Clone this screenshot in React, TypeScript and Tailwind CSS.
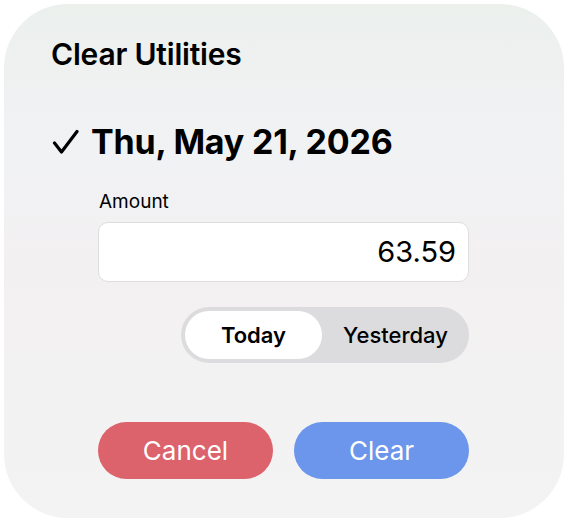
import React, { useState } from 'react';

const Check = () => (
  <svg width="27" height="26" viewBox="0 0 27 26" fill="none" className="shrink-0">
    <path d="M2.5 14 L9.5 23 L25 2.5" stroke="#000" strokeWidth="3.2" strokeLinecap="round" strokeLinejoin="round" />
  </svg>
);

export default function App() {
  const [day, setDay] = useState<'today' | 'yesterday'>('today');

  return (
    <div className="w-[568px] h-[523px] bg-white p-[4px] font-['Inter','Liberation_Sans',sans-serif] text-black">
      <div className="w-[560px] h-[514px] rounded-[64px] bg-[linear-gradient(180deg,#ebf0ed_0%,#eff1f1_14%,#f1f2f4_30%,#f3f0f1_52%,#f3f2f2_70%,#f3f3f3_100%)] pl-[47px] pt-[32px]">
        <h1 className="text-[30px] leading-[36px] font-semibold tracking-[-0.2px]">Clear Utilities</h1>

        <div className="mt-[50px] flex items-center gap-[12px] pl-[1px]">
          <Check />
          <span className="text-[34px] leading-[40px] font-bold tracking-[-0.2px]">Thu, May 21, 2026</span>
        </div>

        <div className="ml-[47px] w-[371px] flex flex-col">
          <label className="mt-[28px] text-[19px] leading-[24px] pl-[1px]">Amount</label>
          <div className="mt-[8px] h-[60px] rounded-[10px] bg-white border border-[#dedede] flex items-center justify-end pr-[12px]">
            <span className="text-[29px] leading-[34px]">63.59</span>
          </div>

          <div className="mt-[25px] self-end w-[288px] h-[56px] rounded-full bg-[#dcdcdf] p-[4px] flex">
            <button
              onClick={() => setDay('today')}
              className={`w-[137px] rounded-full text-[22px] leading-[28px] font-semibold ${day === 'today' ? 'bg-white' : ''}`}
            >
              Today
            </button>
            <button
              onClick={() => setDay('yesterday')}
              className={`flex-1 pl-[4px] rounded-full text-[22px] leading-[28px] font-medium ${day === 'yesterday' ? 'bg-white' : ''}`}
            >
              Yesterday
            </button>
          </div>

          <div className="mt-[59px] flex gap-[21px]">
            <button className="flex-1 h-[57px] rounded-full bg-[#dc626b] text-white text-[26px] leading-[32px]">Cancel</button>
            <button className="flex-1 h-[57px] rounded-full bg-[#6b96eb] text-white text-[26px] leading-[32px]">Clear</button>
          </div>
        </div>
      </div>
    </div>
  );
}
